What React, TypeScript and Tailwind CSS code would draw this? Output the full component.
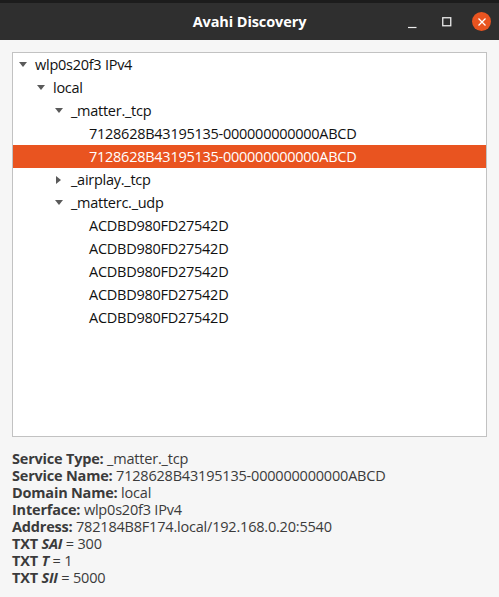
import { ReactNode } from "react";

type Row = {
  depth: number;
  label: string;
  expander?: "open" | "closed";
  selected?: boolean;
};

const rows: Row[] = [
  { depth: 0, label: "wlp0s20f3 IPv4", expander: "open" },
  { depth: 1, label: "local", expander: "open" },
  { depth: 2, label: "_matter._tcp", expander: "open" },
  { depth: 3, label: "7128628B43195135-000000000000ABCD" },
  { depth: 3, label: "7128628B43195135-000000000000ABCD", selected: true },
  { depth: 2, label: "_airplay._tcp", expander: "closed" },
  { depth: 2, label: "_matterc._udp", expander: "open" },
  { depth: 3, label: "ACDBD980FD27542D" },
  { depth: 3, label: "ACDBD980FD27542D" },
  { depth: 3, label: "ACDBD980FD27542D" },
  { depth: 3, label: "ACDBD980FD27542D" },
  { depth: 3, label: "ACDBD980FD27542D" },
];

const indent = ["pl-[4px]", "pl-[22px]", "pl-[40px]", "pl-[58px]"];

function Expander({ kind }: { kind?: "open" | "closed" }) {
  if (!kind) return <span className="w-[18px] shrink-0" />;
  return (
    <span className="w-[18px] shrink-0 flex items-center">
      {kind === "open" ? (
        <svg width="8" height="5" viewBox="0 0 8 5" className="ml-[2px]">
          <path d="M0 0 H8 L4 5 Z" fill="#5a5a5a" />
        </svg>
      ) : (
        <svg width="5" height="8" viewBox="0 0 5 8" className="ml-[3px]">
          <path d="M0 0 V8 L5 4 Z" fill="#5a5a5a" />
        </svg>
      )}
    </span>
  );
}

function Detail({ label, children }: { label: ReactNode; children: ReactNode }) {
  return (
    <div className="h-[17px] leading-[17px] whitespace-nowrap">
      <span className="font-bold">{label}</span>
      {children}
    </div>
  );
}

export default function App() {
  return (
    <div
      className="w-[499px] h-[597px] flex flex-col bg-[#f6f6f6] overflow-hidden"
      style={{ fontFamily: '"Open Sans", "Noto Sans", sans-serif' }}
    >
      {/* Header bar */}
      <div className="h-[3px] bg-[#1c1c1c]" />
      <div className="h-[37px] bg-[#2f2f2f] flex items-center relative">
        <div className="flex-1 text-center text-white font-bold text-[14.5px] tracking-[-0.1px]">
          Avahi Discovery
        </div>
        <div className="absolute right-[8px] top-0 h-full flex items-center">
          <svg width="9" height="9" viewBox="0 0 9 9" className="mt-[5px]">
            <path d="M0 7.5 H8.5" stroke="#ececec" strokeWidth="1.2" />
          </svg>
          <svg width="10" height="10" viewBox="0 0 10 10" className="ml-[25px]">
            <rect x="0.75" y="0.75" width="8" height="8" fill="none" stroke="#ececec" strokeWidth="1.3" />
          </svg>
          <div className="ml-[20px] w-[19px] h-[19px] rounded-full bg-[#e95420] flex items-center justify-center">
            <svg width="8" height="8" viewBox="0 0 8 8">
              <path d="M0.5 0.5 L7.5 7.5 M7.5 0.5 L0.5 7.5" stroke="#fff" strokeWidth="1.3" />
            </svg>
          </div>
        </div>
      </div>

      {/* Tree view */}
      <div className="mx-[12px] mt-[12px] h-[385px] border border-[#c2c2c2] bg-white text-[14.5px] text-[#111]">
        {rows.map((row, i) => (
          <div
            key={i}
            className={`h-[23px] flex items-center ${indent[row.depth]} ${
              row.selected ? "bg-[#e95420] text-white" : ""
            }`}
          >
            <Expander kind={row.expander} />
            <span className="whitespace-nowrap tracking-[-0.26px]">{row.label}</span>
          </div>
        ))}
      </div>

      {/* Details */}
      <div className="px-[12px] pt-[13px] text-[14.5px] text-[#3b3b3b] tracking-[-0.2px]">
        <Detail label="Service Type: ">_matter._tcp</Detail>
        <Detail label="Service Name: ">7128628B43195135-000000000000ABCD</Detail>
        <Detail label="Domain Name: ">local</Detail>
        <Detail label="Interface: ">wlp0s20f3 IPv4</Detail>
        <Detail label="Address: ">782184B8F174.local/192.168.0.20:5540</Detail>
        <Detail label={<>TXT <i>SAI</i></>}> = 300</Detail>
        <Detail label={<>TXT <i>T</i></>}> = 1</Detail>
        <Detail label={<>TXT <i>SII</i></>}> = 5000</Detail>
      </div>
    </div>
  );
}
